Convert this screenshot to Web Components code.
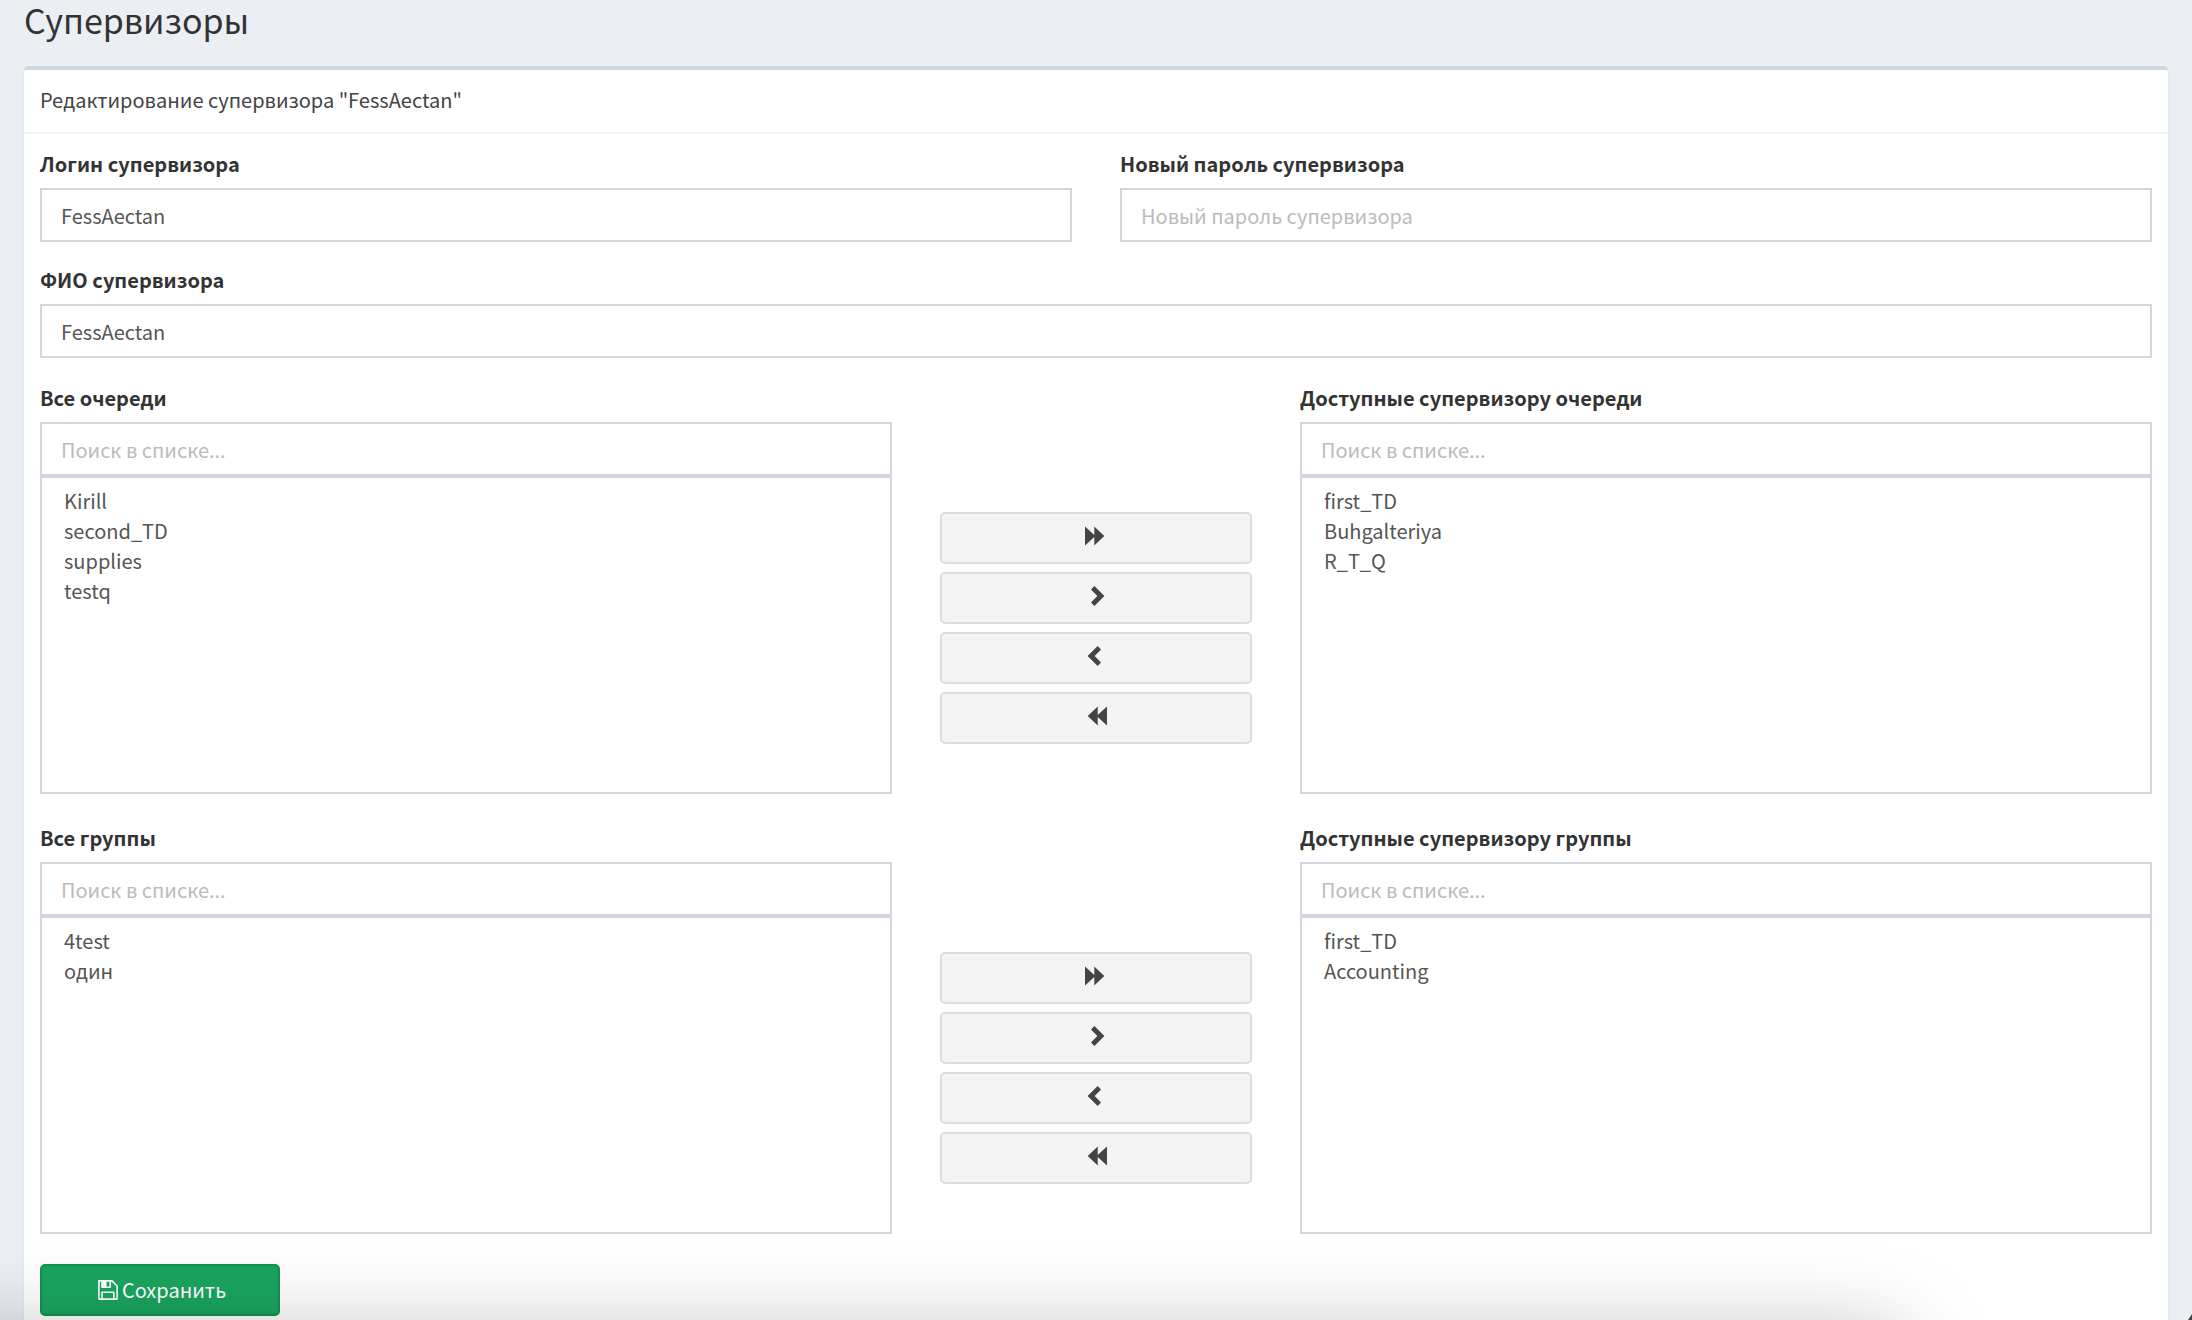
<!DOCTYPE html>
<html lang="ru">
<head>
<meta charset="utf-8">
<title>Супервизоры</title>
<style>
  :root {
    --line: #d2d6df;
    --label: #333;
    --text: #555;
    --hint: #bbb;
    --size: 20px;
    --gutter: 48px;
  }
  html { background: #ebeff4; }
  body {
    margin: 0;
    font-family: "Noto Sans CJK SC", "Noto Sans", sans-serif;
    font-size: var(--size);
    line-height: 32px;
    color: #444;
  }
</style>
</head>
<body>
<supervisor-page></supervisor-page>

<script>
const define = (name, html, setup) => {
  const template = document.createElement('template');
  template.innerHTML = html;
  customElements.define(name, class extends HTMLElement {
    constructor() {
      super();
      this.attachShadow({ mode: 'open' }).append(template.content.cloneNode(true));
    }
    connectedCallback() {
      if (setup && !this.ready) { this.ready = true; setup(this, this.shadowRoot); }
    }
  });
};

const controlCss = `
  *, *::before { box-sizing: border-box; }
  label { display: block; margin-bottom: 8px; font-weight: 700; line-height: 32px; color: var(--label); }
  input {
    display: block; width: 100%; height: 54px; margin: 0; padding: 0 19px;
    border: 2px solid var(--line); border-radius: 0; background: #fff;
    font: inherit; color: var(--text); outline-offset: -2px;
  }
  input::placeholder { color: var(--hint); opacity: 1; }
`;

/* One labelled text box */
define('text-field', `
  <style>${controlCss} :host { display: block; }</style>
  <label for="box"></label>
  <input id="box">
`, (host, root) => {
  const box = root.querySelector('input');
  root.querySelector('label').textContent = host.getAttribute('label');
  box.type = host.getAttribute('type') || 'text';
  box.value = host.getAttribute('value') || '';
  box.placeholder = host.getAttribute('placeholder') || '';
});

/* Labelled list with a search box on top */
define('search-list', `
  <style>
    ${controlCss}
    :host { display: block; }
    select {
      display: block; width: 100%; height: 318px; margin: 0; padding: 8px 18px;
      border: 2px solid var(--line); border-radius: 0; background: #fff;
      font: inherit; color: var(--text); overflow: auto; outline-offset: -2px;
    }
    option { min-height: 30px; padding: 0 4px; font: inherit; line-height: 30px; color: var(--text); }
  </style>
  <label for="list"></label>
  <input type="search" placeholder="Поиск в списке..." aria-label="Поиск в списке">
  <select id="list" multiple></select>
`, (host, root) => {
  const list = root.querySelector('select');
  root.querySelector('label').textContent = host.getAttribute('label');
  for (const name of host.getAttribute('items').split(',')) list.add(new Option(name));
  root.querySelector('input').addEventListener('input', e => {
    const q = e.target.value.toLowerCase();
    for (const o of list.options) o.hidden = !o.text.toLowerCase().includes(q);
  });
  host.list = list;
});

/* Button that moves entries between two lists */
const shapes = {
  'all-right': 'M0 0.5 9.3 9V0.5L19.3 10 9.3 19.5V11L0 19.5Z',
  'right': 'M9.4 0 19.4 10 9.4 20 6 16.6 12.4 10 6 3.4Z',
  'left': 'M12.6 0 2.6 10 12.6 20 16 16.6 9.6 10 16 3.4Z',
  'all-left': 'M22 0.5 12.7 9V0.5L2.7 10 12.7 19.5V11L22 19.5Z'
};
define('move-button', `
  <style>
    :host { display: block; }
    button {
      display: flex; justify-content: center; box-sizing: border-box;
      width: 100%; height: 52px; margin: 0; padding: 12px 24px 16px;
      border: 2px solid #ddd; border-radius: 5px; background: #f4f4f4; color: #444; cursor: pointer;
    }
    button:hover { background: #e7e7e7; }
    svg { display: block; width: 22px; height: 20px; fill: currentColor; }
  </style>
  <button type="button"><svg viewBox="0 0 22 20" aria-hidden="true"><path/></svg></button>
`, (host, root) => {
  root.querySelector('path').setAttribute('d', shapes[host.getAttribute('kind')]);
  root.querySelector('button').setAttribute('aria-label', host.getAttribute('hint'));
});

/* Two lists with the four move buttons between them */
define('dual-list', `
  <style>
    :host { display: grid; grid-template-columns: repeat(12, minmax(0, 1fr)); column-gap: var(--gutter); }
    search-list { grid-column: span 5; }
    .moves { grid-column: span 2; display: flex; flex-direction: column; gap: 8px; padding-top: 130px; }
  </style>
  <div class="moves">
    <move-button kind="all-right" hint="Добавить все"></move-button>
    <move-button kind="right" hint="Добавить"></move-button>
    <move-button kind="left" hint="Убрать"></move-button>
    <move-button kind="all-left" hint="Убрать все"></move-button>
  </div>
`, (host, root) => {
  const moves = root.querySelector('.moves');
  const build = side => {
    const el = document.createElement('search-list');
    el.setAttribute('label', host.getAttribute(side + '-label'));
    el.setAttribute('items', host.getAttribute(side + '-items'));
    return el;
  };
  const from = build('from'), to = build('to');
  moves.before(from);
  moves.after(to);
  moves.addEventListener('click', e => {
    const kind = e.target.getAttribute('kind');
    if (!kind) return;
    const [src, dst] = kind.includes('right') ? [from.list, to.list] : [to.list, from.list];
    const all = kind.startsWith('all');
    [...src.options].filter(o => all || o.selected).forEach(o => dst.add(o));
  });
});

/* Green submit button with a floppy disk */
define('save-button', `
  <style>
    :host { display: block; width: 240px; }
    button {
      display: flex; align-items: center; justify-content: center; gap: 4px; box-sizing: border-box;
      width: 100%; height: 52px; margin: 0; padding: 0 0 0 4px;
      border: 2px solid #16904f; border-radius: 5px; background: #1aa55f;
      font: inherit; color: #fff; cursor: pointer;
    }
    button:hover { background: #16904f; }
    svg { width: 20px; height: 20px; fill: none; stroke: currentColor; stroke-width: 1.6; stroke-linejoin: round; }
  </style>
  <button type="submit">
    <svg viewBox="0 0 20 20" aria-hidden="true">
      <path d="M.9.9H14L19.1 6V19.1H.9Z"/>
      <path d="M4 19V12.2H15.8V19M3.9 1V7.3H12.2V1"/>
      <path d="M4 1H8.6V7H4Z" fill="currentColor" stroke="none"/>
    </svg>
    <slot></slot>
  </button>
`);

/* White panel with a title bar */
define('panel-box', `
  <style>
    :host {
      display: block; border-top: 4px solid var(--line); border-radius: 5px;
      background: #fff; box-shadow: 0 2px 2px rgba(0, 0, 0, .1);
    }
    header { padding: 14px 16px 16px; border-bottom: 2px solid #f4f4f4; }
    .body { padding: 14px 16px 16px; }
  </style>
  <header><slot name="title"></slot></header>
  <div class="body"><slot></slot></div>
`);

/* Soft shadow cast over the foot of the page, and the dark tip of the window corner */
define('foot-shade', `
  <style>
    :host { position: fixed; inset: 0; overflow: hidden; pointer-events: none; }
    .shade {
      position: absolute; top: 100%; left: -200px; right: 288px; height: 200px; border-radius: 16px;
      box-shadow: 0 14px 90px rgba(0, 0, 0, .26);
    }
    .tip {
      position: absolute; right: 0; bottom: 0; width: 4px; height: 6px;
      background: #444; clip-path: polygon(100% 0, 100% 100%, 0 100%);
    }
  </style>
  <div class="shade"></div>
  <div class="tip"></div>
`);

define('supervisor-page', `
  <style>
    :host { display: block; padding: 0 24px 24px; }
    h1 { margin: 0; padding-bottom: 26px; font-size: 34px; font-weight: 400; line-height: 40px; color: #333; }
    h2 { margin: 0; font-size: var(--size); font-weight: 400; line-height: 32px; color: #444; }
    form { margin: 0; }
    .pair { display: grid; grid-template-columns: repeat(2, minmax(0, 1fr)); column-gap: var(--gutter); }
    .fields { display: flex; flex-direction: column; gap: 22px; }
    .lists { display: flex; flex-direction: column; gap: 28px; padding: 24px 0 30px; }
  </style>
  <h1>Супервизоры</h1>
  <panel-box>
    <h2 slot="title">Редактирование супервизора "FessAectan"</h2>
    <form onsubmit="return false">
      <div class="fields">
        <div class="pair">
          <text-field label="Логин супервизора" value="FessAectan"></text-field>
          <text-field label="Новый пароль супервизора" type="password" placeholder="Новый пароль супервизора"></text-field>
        </div>
        <text-field label="ФИО супервизора" value="FessAectan"></text-field>
      </div>
      <div class="lists">
        <dual-list from-label="Все очереди" from-items="Kirill,second_TD,supplies,testq"
          to-label="Доступные супервизору очереди" to-items="first_TD,Buhgalteriya,R_T_Q"></dual-list>
        <dual-list from-label="Все группы" from-items="4test,один"
          to-label="Доступные супервизору группы" to-items="first_TD,Accounting"></dual-list>
      </div>
      <save-button>Сохранить</save-button>
    </form>
  </panel-box>
  <foot-shade></foot-shade>
`);
</script>
</body>
</html>
